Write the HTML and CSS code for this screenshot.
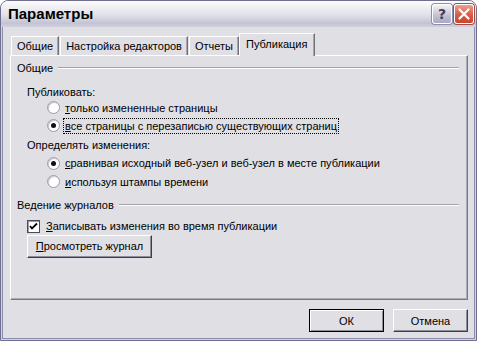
FILE: index.html
```html
<!DOCTYPE html>
<html lang="ru">
<head>
<meta charset="UTF-8">
<title>Параметры</title>
<link rel="stylesheet" href="styles.css">
</head>
<body>
<div class="window">
    <div class="titlebar">
        <span class="caption">Параметры</span>
        <span class="tbtn help">?</span>
        <span class="tbtn close">
            <svg width="12" height="12" viewBox="0 0 12 12"><path d="M1.5 1.5L10.5 10.5M10.5 1.5L1.5 10.5" stroke="#fff" stroke-width="2.2" stroke-linecap="round"/></svg>
        </span>
    </div>
    <div class="client">
        <div class="tabs">
            <div class="tab">Общие</div>
            <div class="tab">Настройка редакторов</div>
            <div class="tab">Отчеты</div>
            <div class="tab on">Публикация</div>
        </div>
        <div class="panel">
            <div class="group"><span>Общие</span><i></i></div>
            <div class="row label">Публиковать:</div>
            <div class="row opt r1"><span class="radio"></span><span class="txt"><u>т</u>олько измененные страницы</span></div>
            <div class="row opt r2"><span class="radio on"></span><span class="txt focus"><u>в</u>се страницы с перезаписью существующих страниц</span></div>
            <div class="row label r3">Определять изменения:</div>
            <div class="row opt r4"><span class="radio on"></span><span class="txt"><u>с</u>равнивая исходный веб-узел и веб-узел в месте публикации</span></div>
            <div class="row opt r5"><span class="radio"></span><span class="txt"><u>и</u>спользуя штампы времени</span></div>
            <div class="group g2"><span>Ведение журналов</span><i></i></div>
            <div class="row check"><span class="box"><svg width="9" height="9" viewBox="0 0 9 9"><path d="M1 4L3 6.5L8 1.5" fill="none" stroke="#000" stroke-width="1.8"/></svg></span><span class="txt"><u>З</u>аписывать изменения во время публикации</span></div>
            <div class="row"><span class="btn wide"><u>П</u>росмотреть журнал</span></div>
        </div>
        <div class="footer">
            <span class="btn def">ОК</span>
            <span class="btn">Отмена</span>
        </div>
    </div>
</div>
</body>
</html>
```
FILE: styles.css
```css
*{margin:0;padding:0;box-sizing:border-box;}
body{background:#fff;font-family:"Liberation Sans",Arial,sans-serif;font-size:11px;color:#000;}
u{text-decoration:underline;text-underline-offset:1px;}

.window{width:477px;height:341px;border:1px solid #6f6e8f;border-radius:8px 8px 0 0;background:#d3d2e0;display:flex;flex-direction:column;overflow:hidden;}

.titlebar{height:26px;flex:none;display:flex;align-items:center;padding:0 2px 0 7px;
    background:linear-gradient(to bottom,#fdfdfe 0%,#efeff4 25%,#e0e0e8 55%,#c4c3d4 85%,#d0cfdc 100%);}
.caption{flex:1;font-family:"Liberation Sans",Arial,sans-serif;font-weight:bold;font-size:15px;margin-top:-1px;}
.tbtn{width:20px;height:20px;margin-left:2px;border:1px solid #fff;border-radius:3px;display:flex;align-items:center;justify-content:center;margin-top:-1px;}
.help{background:linear-gradient(to bottom,#f2f2f6,#c2c1d3 60%,#a9a8c0);box-shadow:0 0 0 1px #8e8dab;font-family:"DejaVu Sans",sans-serif;font-weight:bold;font-size:14px;color:#3d3d56;}
.close{background:linear-gradient(to bottom,#ef9f90,#d9604a 50%,#c74631);box-shadow:0 0 0 1px #a34c44;}

.client{flex:1;margin:0 1px 1px;border:1px solid #8c8bab;border-top:none;background:#e0dfe3;padding:6px 6px 0 7px;display:flex;flex-direction:column;}

.tabs{display:flex;height:22px;}
.tab{margin-top:3px;height:19px;padding:0 5px;display:flex;align-items:center;border-top:1px solid #fff;border-left:1px solid #fff;border-right:1px solid #716f7a;box-shadow:inset -1px 0 0 #a6a5b0;margin-right:1px;white-space:nowrap;}
.tab:first-child{margin-left:1px;}
.tab.on{margin-top:0;height:23px;padding:0 7px 2px 6px;margin-left:-1px;position:relative;z-index:1;background:#e0dfe3;}

.panel{height:245px;border:1px solid #fff;border-right-color:#7a7886;border-bottom-color:#7a7886;box-shadow:inset -1px -1px 0 #adacb6;padding:3px 0 0 6px;display:flex;flex-direction:column;}

.group{display:flex;align-items:center;height:18px;padding-right:8px;}
.group i{flex:1;height:2px;border-top:1px solid #a3a2ad;border-bottom:1px solid #fff;margin-left:5px;}
.g2{margin-top:5px;}

.row{display:flex;align-items:center;height:18px;}
.label{padding-left:10px;margin-top:7px;height:15px;}
.opt{padding-left:30px;}
.r1{height:17px;}
.r2{height:19px;}
.r3{margin-top:0;height:19px;}
.r5{height:19px;}
.radio{width:13px;height:13px;border-radius:50%;background:#fff;border:1px solid #9d9ca8;box-shadow:inset 1px 1px 0 #c9c8d2;margin-right:3px;display:flex;align-items:center;justify-content:center;flex:none;}
.radio.on::after{content:"";width:5px;height:5px;border-radius:50%;background:#111;}
.txt{padding:1px 1px;border:1px dotted transparent;white-space:nowrap;}
.txt.focus{border-color:#000;}

.check{padding-left:10px;margin-top:3px;}
.box{width:13px;height:13px;background:#fff;border:1px solid #4b4b55;box-shadow:inset 1px 1px 0 #9c9ba6;margin-right:4px;display:flex;align-items:center;justify-content:center;flex:none;}

.btn{height:23px;width:75px;display:flex;align-items:center;justify-content:center;background:#e0dfe3;border:1px solid #fff;border-right-color:#404040;border-bottom-color:#404040;box-shadow:inset -1px -1px 0 #8d8c98;}
.btn.wide{width:125px;margin-left:10px;margin-top:4px;}
.btn.def{outline:1px solid #000;outline-offset:-1px;border-top-color:#000;border-left-color:#000;box-shadow:inset 1px 1px 0 #fff,inset -1px -1px 0 #8d8c98;}

.footer{display:flex;justify-content:flex-end;gap:9px;margin-top:9px;}
```
